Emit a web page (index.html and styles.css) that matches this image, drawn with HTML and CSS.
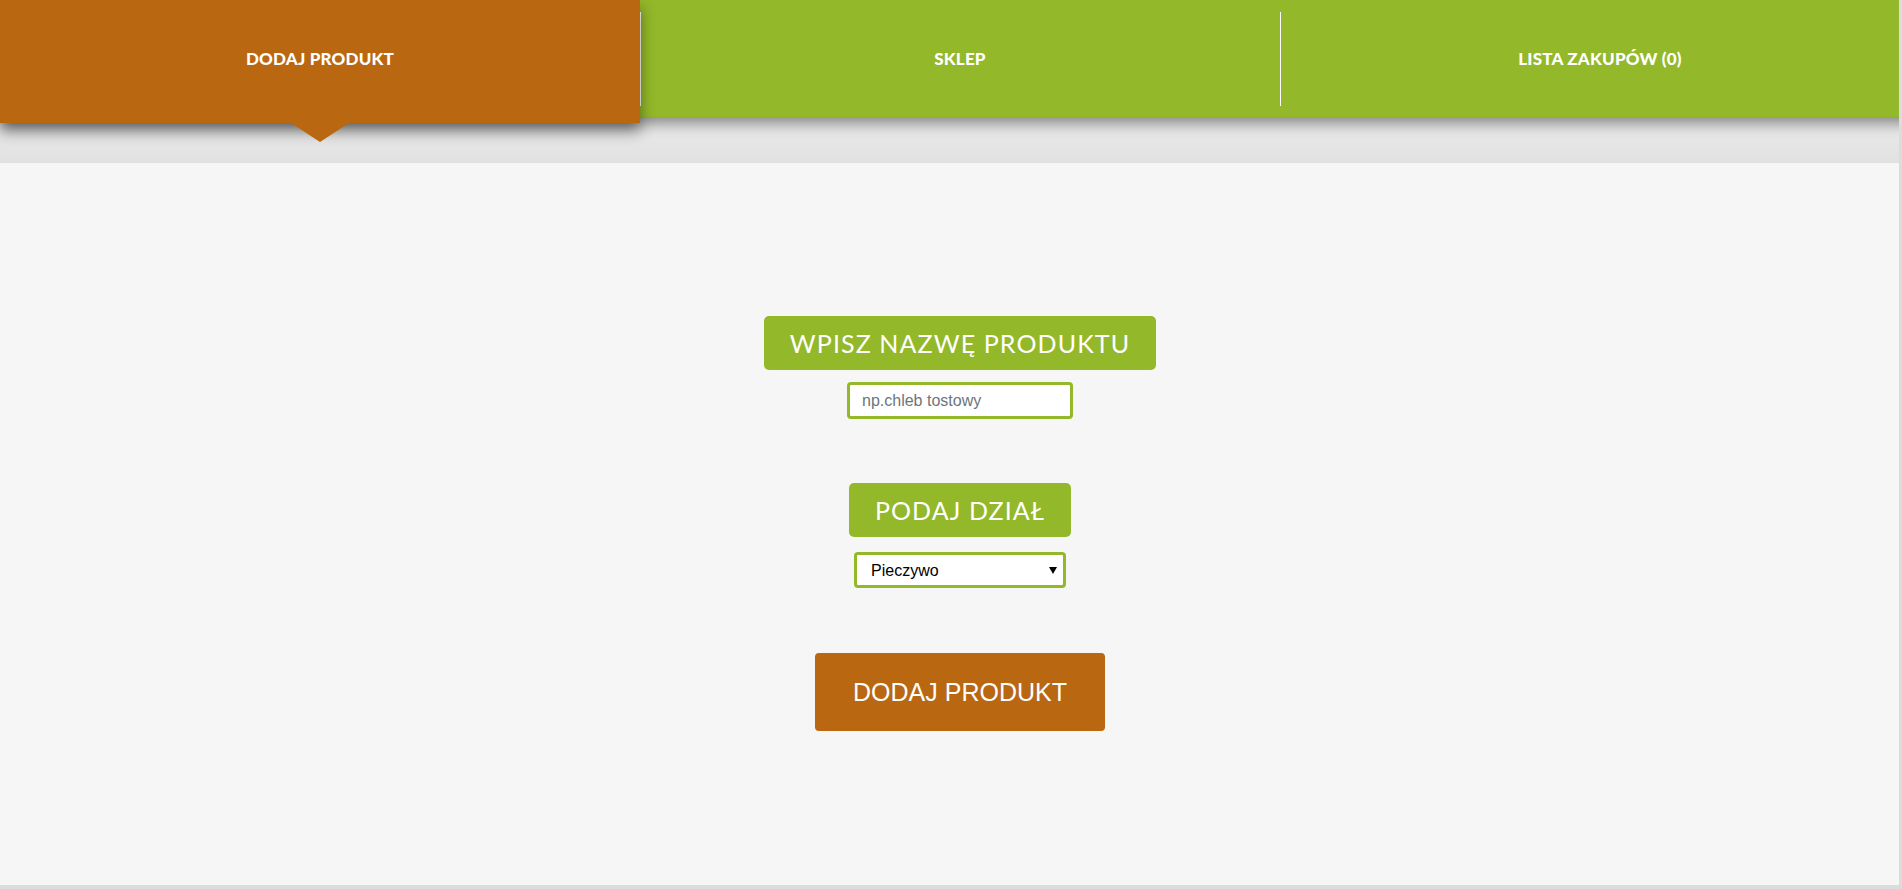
FILE: index.html
```html
<!DOCTYPE html>
<html lang="pl">
<head>
<meta charset="utf-8">
<title>Lista zakupów</title>
<link rel="stylesheet" href="styles.css">
</head>
<body>
<div class="page">
  <header class="top">
    <nav class="tabs">
      <a class="tab active" href="#">DODAJ PRODUKT</a>
      <a class="tab" href="#">SKLEP</a>
      <a class="tab" href="#">LISTA ZAKUPÓW (0)</a>
    </nav>
  </header>
  <main class="main">
    <form class="form">
      <label class="badge" for="name">WPISZ NAZWĘ PRODUKTU</label>
      <input class="field" id="name" type="text" placeholder="np.chleb tostowy">
      <label class="badge badge-second" for="dept">PODAJ DZIAŁ</label>
      <span class="select-wrap">
        <select class="select" id="dept">
          <option>Pieczywo</option>
          <option>Nabiał</option>
          <option>Warzywa</option>
        </select>
      </span>
      <button class="submit" type="button">DODAJ PRODUKT</button>
    </form>
  </main>
</div>
</body>
</html>
```
FILE: styles.css
```css
html, body {
  margin: 0;
  height: 100%;
}
body {
  background: #dcdcdc;
  overflow: hidden;
}
.page {
  width: calc(100% - 3px);
  height: 885px;
  display: flex;
  flex-direction: column;
  overflow: hidden;
}
.top {
  flex: none;
  height: 163px;
  background: linear-gradient(#ededed 0%, #ececec 70%, #e1e1e1 100%);
}
.tabs {
  position: relative;
  z-index: 1;
  display: flex;
  align-items: flex-start;
  width: 1920px;
  height: 117px;
  background: #93b829;
  box-shadow: 0 6px 14px rgba(0, 0, 0, 0.45);
}
.tab {
  position: relative;
  flex: 0 0 640px;
  height: 117px;
  display: flex;
  align-items: center;
  justify-content: center;
  color: #fff;
  font-family: Lato, "Open Sans", sans-serif;
  font-weight: 900;
  font-size: 17px;
  letter-spacing: 0.2px;
  text-decoration: none;
  box-sizing: border-box;
}
.tab + .tab::before {
  content: "";
  position: absolute;
  left: 0;
  top: 12px;
  bottom: 11px;
  width: 1px;
  background: #fff;
}
.tab.active {
  z-index: 2;
  height: 123px;
  padding-bottom: 6px;
  background: #b96710;
  box-shadow: 0 8px 14px rgba(0, 0, 0, 0.45);
}
.tab.active::after {
  content: "";
  position: absolute;
  top: 100%;
  left: 50%;
  margin-left: -29px;
  border-left: 29px solid transparent;
  border-right: 29px solid transparent;
  border-top: 19px solid #b96710;
}
.main {
  flex: 1;
  background: #f6f6f6;
  overflow: hidden;
}
.form {
  width: 1920px;
  display: flex;
  flex-direction: column;
  align-items: center;
  padding-top: 153px;
  margin: 0;
}
.badge {
  display: block;
  height: 54px;
  line-height: 54px;
  padding: 0 26px;
  background: #93b829;
  color: #fff;
  font-family: Lato, "Open Sans", sans-serif;
  font-size: 25px;
  letter-spacing: 1.1px;
  border-radius: 5px;
}
.badge-second {
  margin-top: 64px;
}
.field {
  margin-top: 12px;
  width: 226px;
  height: 37px;
  box-sizing: border-box;
  border: 3px solid #93b829;
  border-radius: 4px;
  padding: 0 12px;
  background: #fff;
  font-family: "Liberation Sans", Arial, sans-serif;
  font-size: 16px;
  color: #222;
  outline: none;
}
.field::placeholder {
  color: #6c757d;
}
.select-wrap {
  position: relative;
  display: block;
  margin-top: 15px;
}
.select-wrap::after {
  content: "";
  position: absolute;
  right: 9px;
  top: 15px;
  border-left: 4px solid transparent;
  border-right: 4px solid transparent;
  border-top: 7px solid #000;
  pointer-events: none;
}
.select {
  display: block;
  width: 212px;
  height: 36px;
  box-sizing: border-box;
  border: 3px solid #93b829;
  border-radius: 4px;
  padding: 0 14px;
  background: #fff;
  font-family: "Liberation Sans", Arial, sans-serif;
  font-size: 16px;
  color: #000;
  appearance: none;
  -webkit-appearance: none;
  outline: none;
}
.submit {
  margin-top: 65px;
  height: 78px;
  padding: 0 38px;
  border: none;
  border-radius: 4px;
  background: #b96710;
  color: #fff;
  font-family: "Liberation Sans", Arial, sans-serif;
  font-size: 25px;
  cursor: pointer;
}
```
